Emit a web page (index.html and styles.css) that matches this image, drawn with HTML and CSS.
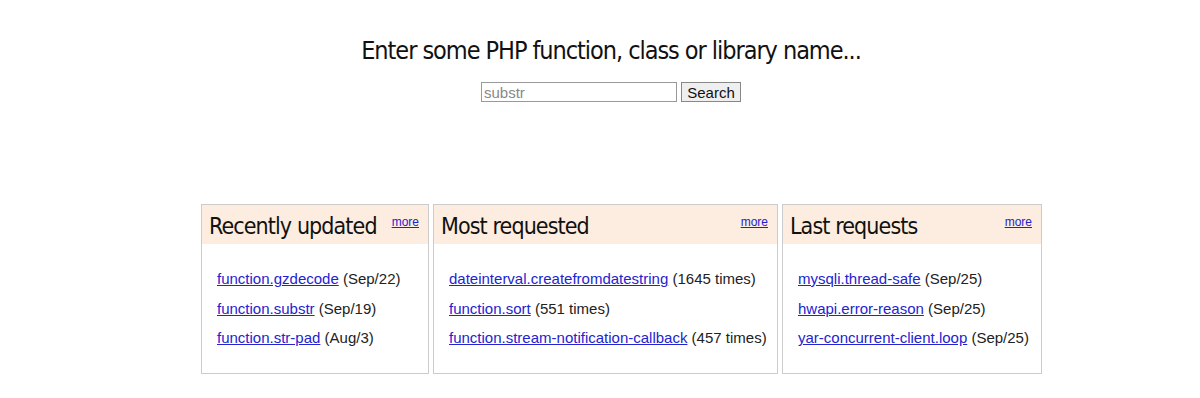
FILE: index.html
```html
<!DOCTYPE html>
<html>
<head>
<meta charset="utf-8">
<link rel="stylesheet" href="styles.css">
</head>
<body>
<div class="search">
  <h1 class="title">Enter some PHP function, class or library name...</h1>
  <form class="form">
    <input class="query" type="text" placeholder="substr">
    <button class="btn" type="button">Search</button>
  </form>
</div>
<div class="boxes">
  <div class="box box1">
    <div class="head"><span class="htitle">Recently updated</span><a class="more" href="#">more</a></div>
    <ul class="list">
      <li><a href="#">function.gzdecode</a> (Sep/22)</li>
      <li><a href="#">function.substr</a> (Sep/19)</li>
      <li><a href="#">function.str-pad</a> (Aug/3)</li>
    </ul>
  </div>
  <div class="box box2">
    <div class="head"><span class="htitle">Most requested</span><a class="more" href="#">more</a></div>
    <ul class="list">
      <li><a href="#">dateinterval.createfromdatestring</a> (1645 times)</li>
      <li><a href="#">function.sort</a> (551 times)</li>
      <li><a href="#">function.stream-notification-callback</a> (457 times)</li>
    </ul>
  </div>
  <div class="box box3">
    <div class="head"><span class="htitle">Last requests</span><a class="more" href="#">more</a></div>
    <ul class="list">
      <li><a href="#">mysqli.thread-safe</a> (Sep/25)</li>
      <li><a href="#">hwapi.error-reason</a> (Sep/25)</li>
      <li><a href="#">yar-concurrent-client.loop</a> (Sep/25)</li>
    </ul>
  </div>
</div>
</body>
</html>
```
FILE: styles.css
```css
html, body {
  margin: 0;
  padding: 0;
  background: #fff;
  color: #222;
  font-family: "Liberation Sans", Arial, sans-serif;
  font-size: 15px;
}
.search {
  padding-top: 35px;
  padding-left: 22px;
  text-align: center;
}
.title {
  margin: 0;
  font-family: "DejaVu Sans Condensed", "DejaVu Sans", Tahoma, sans-serif;
  font-weight: normal;
  font-size: 25px;
  letter-spacing: -1.05px;
  line-height: 32px;
  color: #111;
}
.form {
  margin-top: 15px;
  display: flex;
  justify-content: center;
  gap: 4px;
}
.query {
  box-sizing: border-box;
  width: 196px;
  height: 20px;
  border: 1px solid #999;
  padding: 0 2px;
  font-family: "Liberation Sans", Arial, sans-serif;
  font-size: 15px;
  color: #222;
}
.query::placeholder {
  color: #888;
}
.btn {
  box-sizing: border-box;
  height: 20px;
  width: 60px;
  padding: 0;
  border: 1px solid #888;
  background: #efefef;
  font-family: "Liberation Sans", Arial, sans-serif;
  font-size: 15px;
  color: #111;
}
.boxes {
  display: flex;
  gap: 4px;
  margin-top: 102px;
  padding-left: 201px;
  align-items: stretch;
}
.box {
  box-sizing: border-box;
  border: 1px solid #ccc;
  height: 170px;
}
.box1 { width: 228px; }
.box2 { width: 345px; }
.box3 { width: 260px; }
.head {
  display: flex;
  justify-content: space-between;
  align-items: flex-start;
  background: #fdede0;
  height: 39px;
  padding: 0 9px 0 7px;
}
.htitle {
  font-family: "DejaVu Sans Condensed", "DejaVu Sans", Tahoma, sans-serif;
  font-size: 23px;
  letter-spacing: -0.9px;
  line-height: 42px;
  color: #111;
}
.more {
  font-size: 12px;
  margin-top: 10px;
  color: #2222cc;
}
.list {
  list-style: none;
  margin: 0;
  padding: 20px 0 0 15px;
}
.list li {
  line-height: 29.5px;
  white-space: nowrap;
}
.list a {
  color: #2323d0;
}
```
